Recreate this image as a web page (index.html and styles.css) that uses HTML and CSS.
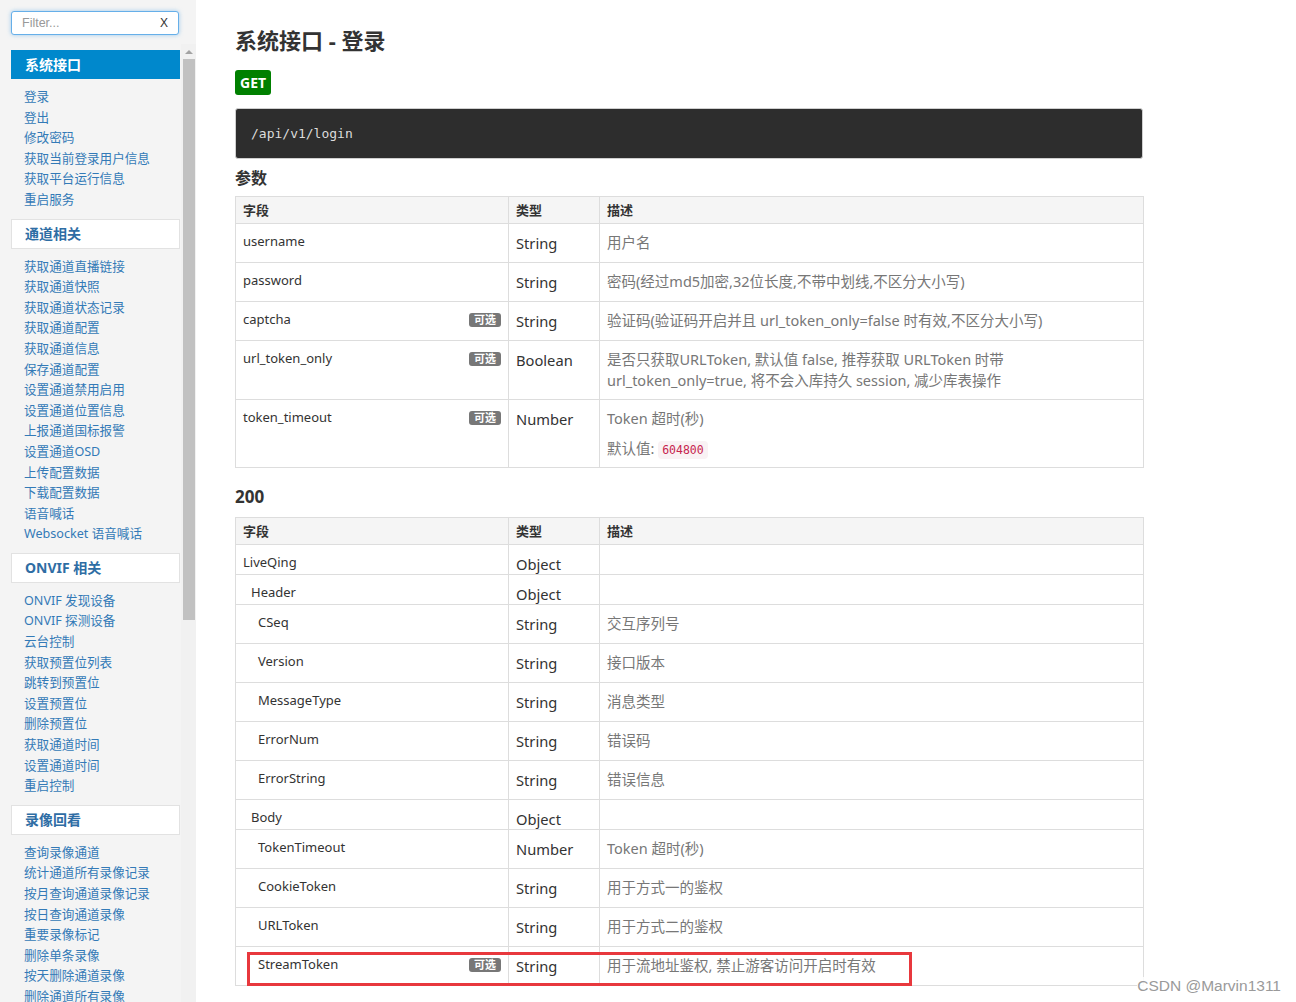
FILE: index.html
```html
<!DOCTYPE html>
<html lang="zh-CN">
<head>
<meta charset="utf-8">
<title>系统接口 - 登录</title>
<link rel="stylesheet" href="styles.css">
</head>
<body>
<div class="page">
  <aside class="sidebar">
    <div class="filter-bar">
      <div class="filter">
        <span class="filter-ph">Filter...</span>
        <span class="filter-x">X</span>
      </div>
    </div>
    <div class="side-body">
      <nav class="nav">
        <div class="nav-head active">系统接口</div>
        <ul class="nav-list">
          <li><a>登录</a></li>
          <li><a>登出</a></li>
          <li><a>修改密码</a></li>
          <li><a>获取当前登录用户信息</a></li>
          <li><a>获取平台运行信息</a></li>
          <li><a>重启服务</a></li>
        </ul>
        <div class="nav-head">通道相关</div>
        <ul class="nav-list">
          <li><a>获取通道直播链接</a></li>
          <li><a>获取通道快照</a></li>
          <li><a>获取通道状态记录</a></li>
          <li><a>获取通道配置</a></li>
          <li><a>获取通道信息</a></li>
          <li><a>保存通道配置</a></li>
          <li><a>设置通道禁用启用</a></li>
          <li><a>设置通道位置信息</a></li>
          <li><a>上报通道国标报警</a></li>
          <li><a>设置通道OSD</a></li>
          <li><a>上传配置数据</a></li>
          <li><a>下载配置数据</a></li>
          <li><a>语音喊话</a></li>
          <li><a>Websocket 语音喊话</a></li>
        </ul>
        <div class="nav-head">ONVIF 相关</div>
        <ul class="nav-list">
          <li><a>ONVIF 发现设备</a></li>
          <li><a>ONVIF 探测设备</a></li>
          <li><a>云台控制</a></li>
          <li><a>获取预置位列表</a></li>
          <li><a>跳转到预置位</a></li>
          <li><a>设置预置位</a></li>
          <li><a>删除预置位</a></li>
          <li><a>获取通道时间</a></li>
          <li><a>设置通道时间</a></li>
          <li><a>重启控制</a></li>
        </ul>
        <div class="nav-head">录像回看</div>
        <ul class="nav-list">
          <li><a>查询录像通道</a></li>
          <li><a>统计通道所有录像记录</a></li>
          <li><a>按月查询通道录像记录</a></li>
          <li><a>按日查询通道录像</a></li>
          <li><a>重要录像标记</a></li>
          <li><a>删除单条录像</a></li>
          <li><a>按天删除通道录像</a></li>
          <li><a>删除通道所有录像</a></li>
        </ul>
      </nav>
      <div class="scrollbar">
        <div class="sb-arrow"></div>
        <div class="sb-thumb"></div>
      </div>
    </div>
  </aside>

  <main class="main">
    <h1 class="title">系统接口 - 登录</h1>
    <div class="method">GET</div>
    <pre class="endpoint">/api/v1/login</pre>

    <h3 class="sec">参数</h3>
    <table class="tbl">
      <colgroup><col class="c1"><col class="c2"><col class="c3"></colgroup>
      <thead><tr><th>字段</th><th>类型</th><th>描述</th></tr></thead>
      <tbody>
        <tr><td class="f">username</td><td class="t">String</td><td class="d"><p>用户名</p></td></tr>
        <tr><td class="f">password</td><td class="t">String</td><td class="d"><p>密码(经过md5加密,32位长度,不带中划线,不区分大小写)</p></td></tr>
        <tr><td class="f">captcha<span class="opt">可选</span></td><td class="t">String</td><td class="d"><p>验证码(验证码开启并且 url_token_only=false 时有效,不区分大小写)</p></td></tr>
        <tr><td class="f">url_token_only<span class="opt">可选</span></td><td class="t">Boolean</td><td class="d"><p class="multi">是否只获取URLToken, 默认值 false, 推荐获取 URLToken 时带<br>url_token_only=true, 将不会入库持久 session, 减少库表操作</p></td></tr>
        <tr><td class="f">token_timeout<span class="opt">可选</span></td><td class="t">Number</td><td class="d"><p>Token 超时(秒)</p><p class="last">默认值: <code>604800</code></p></td></tr>
      </tbody>
    </table>

    <h3 class="sec code">200</h3>
    <table class="tbl">
      <colgroup><col class="c1"><col class="c2"><col class="c3"></colgroup>
      <thead><tr><th>字段</th><th>类型</th><th>描述</th></tr></thead>
      <tbody>
        <tr><td class="f">LiveQing</td><td class="t">Object</td><td class="d"></td></tr>
        <tr><td class="f l1">Header</td><td class="t">Object</td><td class="d"></td></tr>
        <tr><td class="f l2">CSeq</td><td class="t">String</td><td class="d"><p>交互序列号</p></td></tr>
        <tr><td class="f l2">Version</td><td class="t">String</td><td class="d"><p>接口版本</p></td></tr>
        <tr><td class="f l2">MessageType</td><td class="t">String</td><td class="d"><p>消息类型</p></td></tr>
        <tr><td class="f l2">ErrorNum</td><td class="t">String</td><td class="d"><p>错误码</p></td></tr>
        <tr><td class="f l2">ErrorString</td><td class="t">String</td><td class="d"><p>错误信息</p></td></tr>
        <tr><td class="f l1">Body</td><td class="t">Object</td><td class="d"></td></tr>
        <tr><td class="f l2">TokenTimeout</td><td class="t">Number</td><td class="d"><p>Token 超时(秒)</p></td></tr>
        <tr><td class="f l2">CookieToken</td><td class="t">String</td><td class="d"><p>用于方式一的鉴权</p></td></tr>
        <tr><td class="f l2">URLToken</td><td class="t">String</td><td class="d"><p>用于方式二的鉴权</p></td></tr>
        <tr><td class="f l2">StreamToken<span class="opt">可选</span></td><td class="t">String</td><td class="d"><p>用于流地址鉴权, 禁止游客访问开启时有效</p><span class="mark"></span></td></tr>
      </tbody>
    </table>
  </main>
  <div class="watermark">CSDN @Marvin1311</div>
</div>
</body>
</html>
```

FILE: styles.css
```css
* { box-sizing: border-box; }
html, body { margin: 0; padding: 0; background: #fff; }
body {
  font-family: "Noto Sans", "Noto Sans CJK SC", sans-serif;
  color: #333;
  font-size: 13px;
  overflow: hidden;
}
.page {
  display: flex;
  height: 1002px;
  position: relative;
}

/* Sidebar */
.sidebar {
  width: 196px;
  flex: none;
  background: #f4f4f4;
  display: flex;
  flex-direction: column;
  overflow: hidden;
}
.filter-bar {
  height: 44px;
  padding: 11px 18px 0 11px;
}
.filter {
  height: 24px;
  width: 168px;
  background: #fff;
  border: 1px solid #66afe9;
  border-radius: 3px;
  box-shadow: 0 0 4px rgba(102, 175, 233, 0.6);
  display: flex;
  align-items: center;
  justify-content: space-between;
  padding: 0 10px 0 10px;
  font-family: "Liberation Sans", "Noto Sans CJK SC", sans-serif;
  font-size: 12.5px;
}
.filter-ph { color: #999; }
.filter-x { color: #333; font-size: 12px; }
.side-body {
  display: flex;
  flex: 1;
  min-height: 0;
}
.nav {
  width: 181px;
  padding: 6px 0 0 11px;
}
.nav-head {
  width: 169px;
  height: 30px;
  line-height: 28px;
  border: 1px solid #e2e2e2;
  background: #fff;
  padding-left: 13px;
  font-weight: bold;
  font-size: 14px;
  color: #2e6da4;
}
.nav-head.active {
  background: #0088cc;
  border-color: #0088cc;
  color: #fff;
  height: 29px;
}
.nav-list {
  list-style: none;
  margin: 0;
  padding: 8px 0 8px 13px;
}
.nav-list li {
  line-height: 20.6px;
  font-size: 12.6px;
  white-space: nowrap;
}
.nav-list a { color: #337ab7; }
.scrollbar {
  width: 15px;
  flex: none;
  background: #f1f1f1;
  display: flex;
  flex-direction: column;
  align-items: center;
}
.sb-arrow {
  height: 15px;
  width: 15px;
  display: flex;
  align-items: center;
  justify-content: center;
}
.sb-arrow::before {
  content: "";
  border-left: 4px solid transparent;
  border-right: 4px solid transparent;
  border-bottom: 4px solid #a3a3a3;
}
.sb-thumb {
  width: 12px;
  height: 561px;
  background: #c1c1c1;
}

/* Main */
.main {
  width: 947px;
  padding-left: 39px;
  flex: none;
}
.title {
  margin: 25px 0 15px;
  font-size: 22px;
  line-height: 30px;
  font-weight: bold;
  color: #333;
}
.method {
  width: fit-content;
  height: 25px;
  line-height: 25px;
  padding: 0 5px;
  background: #008000;
  color: #fff;
  font-weight: bold;
  font-size: 14px;
  border-radius: 3px;
}
.endpoint {
  margin: 13px 0 0;
  height: 51px;
  background: #2d2d2d;
  border: 1px solid #cfcfcf;
  border-radius: 3px;
  color: #dcdcdc;
  font-family: "DejaVu Sans Mono", monospace;
  font-size: 13px;
  line-height: 49px;
  padding: 0 15px;
}
.sec {
  margin: 8px 0 7px;
  font-size: 16px;
  line-height: 22px;
  font-weight: 600;
  color: #333;
}
.sec.code {
  margin-top: 17px;
  margin-bottom: 8px;
  font-size: 17px;
  line-height: 24px;
  font-weight: bold;
}

/* Tables */
.tbl {
  width: 909px;
  border-collapse: collapse;
  table-layout: fixed;
}
.c1 { width: 273px; }
.c2 { width: 91px; }
.tbl th, .tbl td {
  border: 1px solid #dddddd;
  text-align: left;
  vertical-align: top;
}
.tbl th {
  background: #f5f5f5;
  font-weight: bold;
  font-size: 13px;
  line-height: 16px;
  padding: 5px 7px 5px;
}
.tbl td { padding: 8px 7px 0; }
.tbl td.f {
  font-size: 13px;
  line-height: 19px;
}
.tbl td.f.l1 { padding-left: 15px; }
.tbl td.f.l2 { padding-left: 22px; }
.tbl td.t {
  font-size: 14.7px;
  line-height: 20px;
  padding-top: 9px;
}
.tbl td.d {
  color: #777;
  font-size: 14.5px;
  line-height: 21px;
  position: relative;
}
.tbl td.d p { margin: 0 0 9px; }
.tbl td.d p.multi { line-height: 20.5px; }
.tbl td.d p.last { margin-bottom: 8px; }
.opt {
  float: right;
  margin-top: 3px;
  background: #777;
  color: #fff;
  font-size: 11px;
  font-weight: bold;
  line-height: 14px;
  padding: 0 5px;
  border-radius: 3px;
}
code {
  font-family: "DejaVu Sans Mono", monospace;
  font-size: 11.5px;
  line-height: 1;
  color: #c7254e;
  background: #f9f2f4;
  padding: 2px 4px;
  border-radius: 4px;
}
.mark {
  position: absolute;
  top: 5px;
  right: 231px;
  width: 665px;
  height: 34px;
  border: 3px solid #e8383d;
  pointer-events: none;
}
.watermark {
  position: absolute;
  right: 15px;
  bottom: 7px;
  font-family: "Liberation Sans", sans-serif;
  font-size: 15.5px;
  color: #9a9a9a;
  background: rgba(255,255,255,0.85);
}
```
